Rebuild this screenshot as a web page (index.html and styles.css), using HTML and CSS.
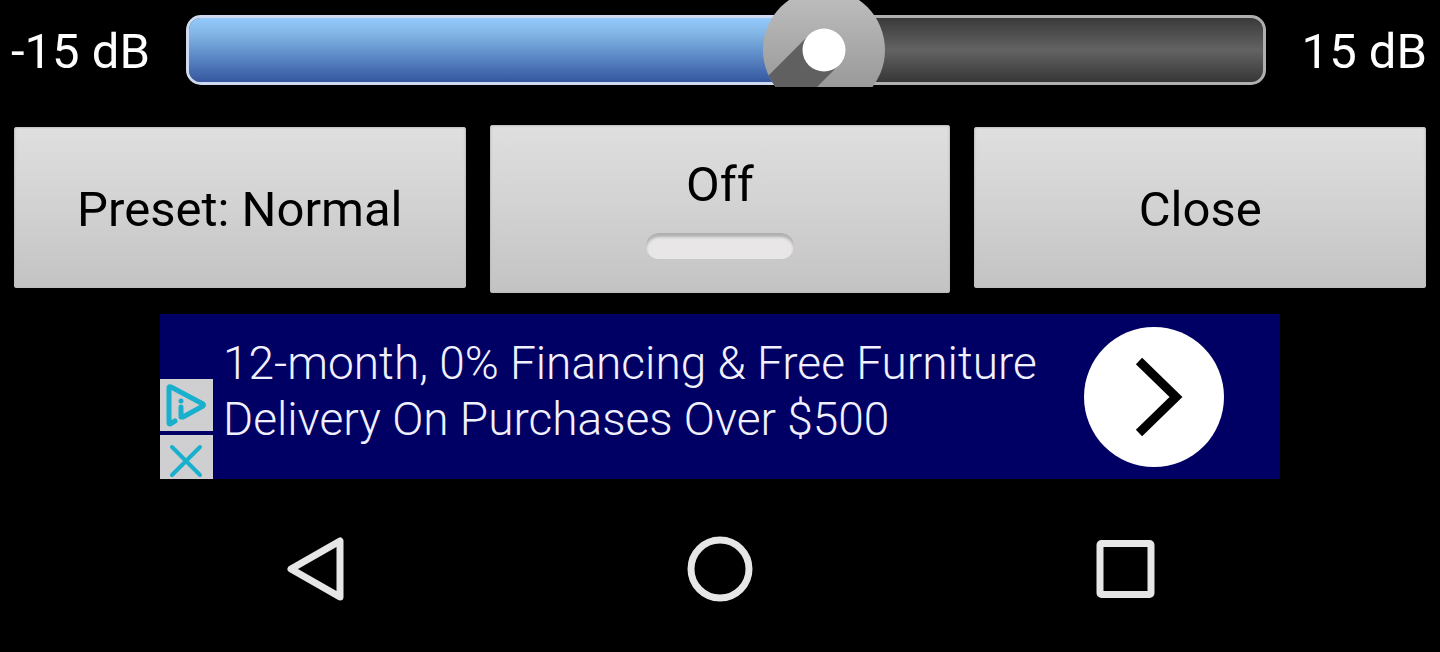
FILE: index.html
```html
<!DOCTYPE html>
<html lang="en">
<head>
<meta charset="utf-8">
<meta name="viewport" content="width=device-width, initial-scale=1">
<title>Equalizer</title>
<link rel="stylesheet" href="styles.css">
</head>
<body>
<main>
  <section class="gain">
    <label class="gain-label" for="gain">-15 dB</label>
    <input class="gain-slider" id="gain" type="range" min="-15" max="15" step="0.1" value="3.1">
    <span class="gain-label">15 dB</span>
  </section>

  <section class="actions">
    <button class="action" type="button">Preset: Normal</button>
    <button class="action action-toggle" type="button" aria-pressed="false">Off<span class="indicator"></span></button>
    <button class="action" type="button">Close</button>
  </section>

  <aside class="ad">
    <div class="ad-tools">
      <button class="ad-tool" type="button" aria-label="Ad choices">
        <svg width="53" height="52" viewBox="0 0 53 52" fill="none" stroke="#18b0cd" stroke-width="5" stroke-linecap="round" stroke-linejoin="round">
          <path d="M15 42 L10 45 Q9 45 9 43 L9 9 Q9 7 11 8 L43 25 Q44 26 43 27 L23 38 L21 38 L21 28"/>
          <circle cx="21" cy="22" r="2.5" fill="#18b0cd" stroke="none"/>
        </svg>
      </button>
      <button class="ad-tool" type="button" aria-label="Close ad">
        <svg width="53" height="44" viewBox="0 0 53 44" fill="none" stroke="#18b0cd" stroke-width="4" stroke-linecap="round">
          <path d="M12 12 L40 40 M40 12 L12 40"/>
        </svg>
      </button>
    </div>
    <a class="ad-text" href="#">12-month, 0% Financing &amp; Free Furniture Delivery On Purchases Over $500</a>
    <button class="ad-go" type="button" aria-label="Open ad">
      <svg width="140" height="140" viewBox="0 0 140 140" fill="none" stroke="#000" stroke-width="9">
        <path d="M55 34 L92 70 L55 106"/>
      </svg>
    </button>
  </aside>
</main>

<nav class="system-nav">
  <button class="nav-button" type="button" aria-label="Back">
    <svg width="66" height="66" viewBox="0 0 66 66" fill="none" stroke="#e6e6e6" stroke-width="7" stroke-linejoin="round"><path d="M56 5 L56 61 L7 33 Z"/></svg>
  </button>
  <button class="nav-button" type="button" aria-label="Home">
    <svg width="66" height="66" viewBox="0 0 66 66" fill="none" stroke="#e6e6e6" stroke-width="7"><circle cx="33" cy="33" r="29"/></svg>
  </button>
  <button class="nav-button" type="button" aria-label="Recent apps">
    <svg width="66" height="66" viewBox="0 0 66 66" fill="none" stroke="#e6e6e6" stroke-width="7"><rect x="10" y="7.5" width="51" height="51" rx="1.5"/></svg>
  </button>
</nav>
</body>
</html>
```

FILE: styles.css
```css
* {
  box-sizing: border-box;
}

body {
  margin: 0;
  background: #000;
  color: #fff;
  font-family: Roboto, "Liberation Sans", sans-serif;
}

button {
  margin: 0;
  padding: 0;
  border: 0;
  background: none;
  color: inherit;
  font: inherit;
}

svg {
  display: block;
}

.gain {
  display: flex;
  align-items: center;
  gap: 36px;
  padding: 0 13px 0 11px;
}

.gain-label {
  margin-top: 4px;
  font-size: 49px;
  line-height: 56px;
  white-space: nowrap;
}

.gain-slider {
  flex: 1;
  min-width: 0;
  height: 100px;
  margin: 0;
  appearance: none;
  background: none;
}

.gain-slider::-webkit-slider-runnable-track {
  height: 70px;
  border: 3px solid transparent;
  border-radius: 15px;
  background:
    linear-gradient(#93cafc, #7fb2e2 28%, #5e8cc8 58%, #3656a0) padding-box 0 0 / 60% 100% no-repeat,
    linear-gradient(#3a3a3a, #636363 50%, #363636) padding-box,
    linear-gradient(90deg, #cfdaf0 60%, #b0b0b0 60%) border-box;
}

.gain-slider::-webkit-slider-thumb {
  width: 122px;
  height: 87px;
  margin-top: -18px;
  appearance: none;
  border: 0;
  background: url("data:image/svg+xml,%3Csvg xmlns='http://www.w3.org/2000/svg' width='122' height='87'%3E%3Cdefs%3E%3ClinearGradient id='g' x1='0' y1='0' x2='0' y2='1'%3E%3Cstop offset='0' stop-color='%23c0c0c0'/%3E%3Cstop offset='1' stop-color='%23909090'/%3E%3C/linearGradient%3E%3CclipPath id='c'%3E%3Ccircle cx='61' cy='50' r='61'/%3E%3C/clipPath%3E%3C/defs%3E%3Ccircle cx='61' cy='50' r='61' fill='url(%23g)'/%3E%3Cpath clip-path='url(%23c)' d='M46 35 L-14 95 L16 125 L76 65 Z' fill='%23606060'/%3E%3Ccircle cx='61' cy='50' r='21.5' fill='%23fff'/%3E%3C/svg%3E") no-repeat;
}

.actions {
  display: grid;
  grid-template-columns: 452fr 461fr 452fr;
  align-items: center;
  gap: 24px;
  padding: 25px 14px 0;
}

.action {
  height: 161px;
  margin-bottom: 3px;
  padding-top: 4px;
  border-radius: 3px;
  background: linear-gradient(#dfdfdf, #d2d2d2 50%, #c3c3c3);
  box-shadow: inset 0 0 2px 1px #bdbdbd;
  color: #000;
  font-size: 49px;
  line-height: 56px;
}

.action-toggle {
  display: flex;
  flex-direction: column;
  align-items: center;
  gap: 20px;
  height: 168px;
  margin-bottom: 0;
  padding-top: 32px;
}

.indicator {
  width: 148px;
  height: 26px;
  border-radius: 13px;
  background: #e9e6e8;
  box-shadow: inset 0 4px 3px #b0b0b0;
}

.ad {
  display: flex;
  align-items: center;
  gap: 10px;
  width: 78%;
  max-width: 1120px;
  min-height: 165px;
  margin: 21px auto 0;
  padding-right: 56px;
  background: #000064;
}

.ad-tools {
  display: flex;
  flex-direction: column;
  align-self: flex-end;
  gap: 4px;
}

.ad-tool {
  background: #cfcfd1;
}

.ad-text {
  flex: 1;
  padding-bottom: 12px;
  color: #f0f0ff;
  font-size: 46px;
  font-weight: 300;
  line-height: 56px;
  text-decoration: none;
}

.ad-go {
  border-radius: 50%;
  background: #fff;
}

.system-nav {
  display: grid;
  grid-template-columns: repeat(3, 1fr);
  justify-items: center;
  padding: 57px 8% 50px;
}
```
